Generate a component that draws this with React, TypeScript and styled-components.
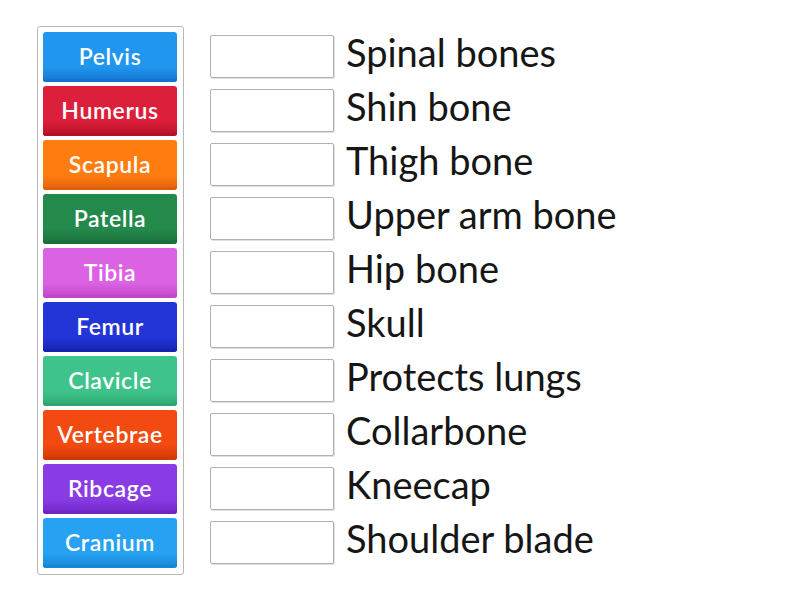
import React from "react";
import styled, { createGlobalStyle } from "styled-components";

const Global = createGlobalStyle`
  html, body { margin: 0; padding: 0; background: #fff; }
  body { font-family: "Lato", "Open Sans", sans-serif; }
`;

const Page = styled.div`
  display: flex;
  align-items: flex-start;
  padding: 26px 0 0 37px;
  gap: 26px;
`;

const Panel = styled.div`
  display: flex;
  flex-direction: column;
  gap: 4px;
  padding: 5px 6px 6px 5px;
  border: 1px solid #b8b8b8;
  border-radius: 3px;
`;

const Tile = styled.div<{ $c: string; $d: string }>`
  width: 134px;
  height: 50px;
  box-sizing: border-box;
  border-radius: 3px;
  background: linear-gradient(to bottom, ${(p) => p.$c} 0%, ${(p) => p.$c} 70%, ${(p) => p.$d} 100%);
  box-shadow: inset 0 -3px 0 ${(p) => p.$d};
  color: #fff;
  font-family: "Lato", sans-serif;
  font-weight: 600;
  font-size: 23px;
  letter-spacing: 0.6px;
  display: flex;
  align-items: center;
  justify-content: center;
  padding-bottom: 3px;
`;

const Rows = styled.div`
  display: flex;
  flex-direction: column;
  gap: 11px;
  padding-top: 9px;
`;

const Row = styled.div`
  display: flex;
  align-items: center;
  gap: 12px;
  height: 43px;
`;

const Slot = styled.div`
  width: 124px;
  height: 43px;
  box-sizing: border-box;
  border: 1px solid #b0b0b0;
  border-radius: 2px;
  box-shadow: 1px 1px 0 #e0e0e0;
  background: #fff;
`;

const Label = styled.div`
  font-family: "Lato", sans-serif;
  font-size: 38px;
  color: #161616;
  line-height: 1;
  white-space: nowrap;
  padding-bottom: 9px;
`;

const tiles: [string, string, string][] = [
  ["Pelvis", "#2196ee", "#1275cf"],
  ["Humerus", "#dc1f3a", "#b5102a"],
  ["Scapula", "#ff7d10", "#e0600a"],
  ["Patella", "#238a4c", "#1a6e3a"],
  ["Tibia", "#dc62e4", "#bf47c8"],
  ["Femur", "#2335d6", "#1622b0"],
  ["Clavicle", "#3ec48a", "#2ea672"],
  ["Vertebrae", "#f24a10", "#d03808"],
  ["Ribcage", "#8a3ce4", "#6e25c4"],
  ["Cranium", "#27a2f2", "#1886d6"],
];

const labels = [
  "Spinal bones",
  "Shin bone",
  "Thigh bone",
  "Upper arm bone",
  "Hip bone",
  "Skull",
  "Protects lungs",
  "Collarbone",
  "Kneecap",
  "Shoulder blade",
];

export default function App() {
  return (
    <>
      <Global />
      <Page>
        <Panel>
          {tiles.map(([t, c, d]) => (
            <Tile key={t} $c={c} $d={d}>
              {t}
            </Tile>
          ))}
        </Panel>
        <Rows>
          {labels.map((l) => (
            <Row key={l}>
              <Slot />
              <Label>{l}</Label>
            </Row>
          ))}
        </Rows>
      </Page>
    </>
  );
}
